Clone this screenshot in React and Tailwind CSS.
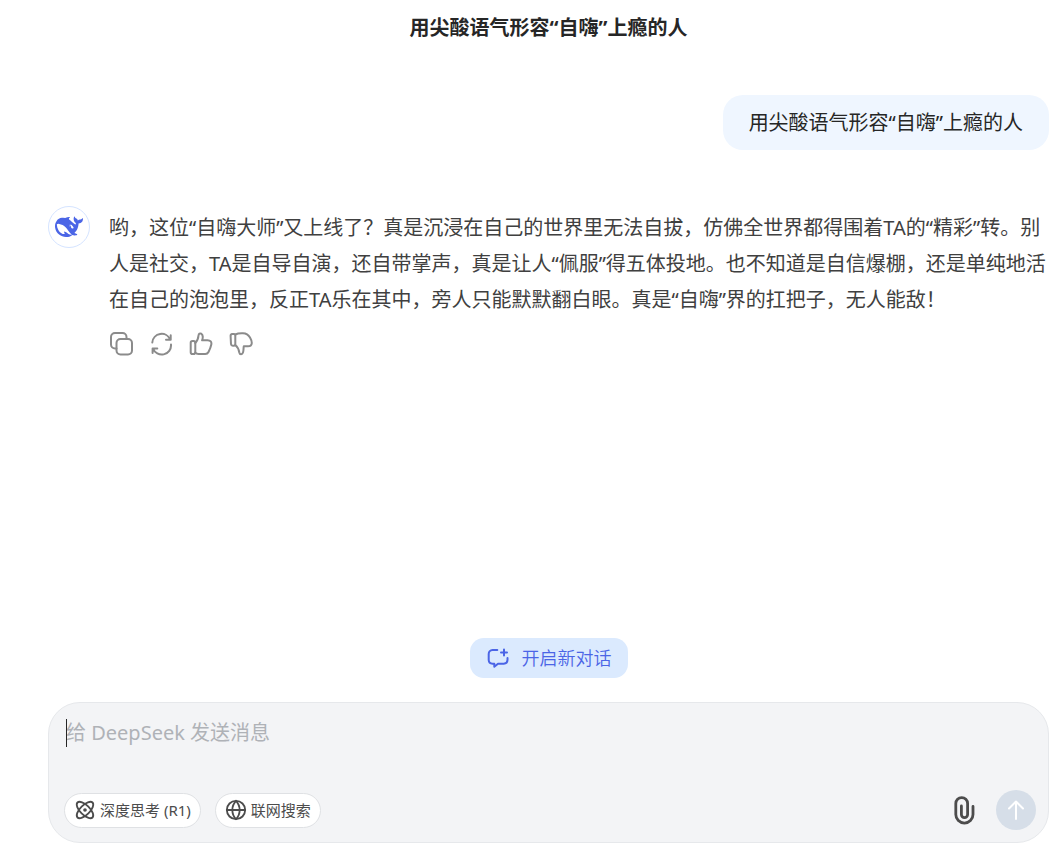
import { useState } from 'react';
import { Atom, Globe } from 'lucide-react';

const QUESTION = '用尖酸语气形容“自嗨”上瘾的人';
const ANSWER =
    '哟，这位“自嗨大师”又上线了？真是沉浸在自己的世界里无法自拔，仿佛全世界都得围着TA的“精彩”转。别人是社交，TA是自导自演，还自带掌声，真是让人“佩服”得五体投地。也不知道是自信爆棚，还是单纯地活在自己的泡泡里，反正TA乐在其中，旁人只能默默翻白眼。真是“自嗨”界的扛把子，无人能敌！';

function LineIcon({ children, className = 'h-6 w-6' }) {
    return (
        <svg
            viewBox="0 0 24 24"
            fill="none"
            stroke="currentColor"
            strokeWidth="2"
            strokeLinecap="round"
            strokeLinejoin="round"
            className={className}
            aria-hidden="true"
        >
            {children}
        </svg>
    );
}

function WhaleLogo() {
    return (
        <svg viewBox="0 0 24 24" className="h-7 w-7 fill-[#4b65e6]" aria-hidden="true">
            <path d="M23.748 4.482c-.254-.124-.364.113-.512.234-.051.039-.094.09-.137.136-.372.397-.806.657-1.373.626-.829-.046-1.537.214-2.163.848-.133-.782-.575-1.248-1.247-1.548-.352-.156-.708-.311-.955-.65-.172-.241-.219-.51-.305-.774-.055-.16-.11-.323-.293-.35-.2-.031-.278.136-.356.276-.313.572-.434 1.202-.422 1.84.027 1.436.633 2.58 1.838 3.393.137.093.172.187.129.323-.082.28-.18.552-.266.833-.055.179-.137.217-.329.14a5.526 5.526 0 01-1.736-1.18c-.857-.828-1.631-1.742-2.597-2.458a11.365 11.365 0 00-.689-.471c-.985-.957.13-1.743.388-1.836.27-.098.093-.432-.779-.428-.872.004-1.67.295-2.687.684a3.055 3.055 0 01-.465.137 9.597 9.597 0 00-2.883-.102c-1.885.21-3.39 1.102-4.497 2.623C.082 8.606-.231 10.684.152 12.85c.403 2.284 1.569 4.175 3.36 5.653 1.858 1.533 3.997 2.284 6.438 2.14 1.482-.085 3.133-.284 4.994-1.86.47.234.962.327 1.78.397.63.059 1.236-.03 1.705-.128.735-.156.684-.837.419-.961-2.155-1.004-1.682-.595-2.113-.926 1.096-1.296 2.746-2.642 3.392-7.003.05-.347.007-.565 0-.845-.004-.17.035-.237.23-.256a4.173 4.173 0 001.545-.475c1.396-.763 1.96-2.015 2.093-3.517.02-.23-.004-.467-.247-.588zM11.581 18c-2.089-1.642-3.102-2.183-3.52-2.16-.392.024-.321.471-.235.763.09.288.207.486.371.739.114.167.192.416-.113.603-.673.416-1.842-.14-1.897-.167-1.361-.802-2.5-1.86-3.301-3.307-.774-1.393-1.224-2.887-1.298-4.482-.02-.386.093-.522.477-.592a4.696 4.696 0 011.529-.039c2.132.312 3.946 1.265 5.468 2.774.868.86 1.525 1.887 2.202 2.891.72 1.066 1.494 2.082 2.48 2.914.348.292.625.514.891.677-.802.09-2.14.11-3.054-.614zm1-6.44a.306.306 0 01.415-.287.302.302 0 01.2.288.306.306 0 01-.31.307.303.303 0 01-.304-.308zm3.11 1.596c-.2.081-.399.151-.59.16a1.245 1.245 0 01-.798-.254c-.274-.23-.47-.358-.552-.758a1.73 1.73 0 01.016-.588c.07-.327-.008-.537-.239-.727-.187-.156-.426-.199-.688-.199a.559.559 0 01-.254-.078c-.11-.054-.2-.19-.114-.358.028-.054.16-.186.192-.21.356-.202.767-.136 1.146.016.352.144.618.408 1.001.782.391.451.462.576.685.914.176.265.336.537.445.848.067.195-.019.354-.25.452z" />
        </svg>
    );
}

const actions = [
    {
        label: '复制',
        icon: (
            <>
                <rect x="7.5" y="7" width="15.5" height="15.5" rx="4" />
                <path d="M7.5 16.5H6A4 4 0 0 1 2 12.5V5a4 4 0 0 1 4-4h7.5a4 4 0 0 1 4 4v2" />
            </>
        ),
    },
    {
        label: '重新生成',
        icon: (
            <>
                <path d="M3.3 10.5A9.3 9.3 0 0 1 21.2 7.7M21.7 3.3v4.4H17" />
                <path d="M22 12.5A9.3 9.3 0 0 1 4 16.5M3.6 20.9V16.5h4.7" />
            </>
        ),
    },
    {
        label: '喜欢',
        icon: (
            <>
                <rect x="1.7" y="9" width="4.6" height="13" rx="1.8" />
                <path d="M6.3 11C8.7 8.7 9.3 6 9.5 3.5C9.7 1.6 11 1 12.2 1.7C14.8 3.3 13.9 6 13.1 8.3H18.5C21.5 8.3 22.8 10 22.3 12.5C21.7 15.5 20.8 17.5 19.5 20C18.8 21.4 17.8 22 16.3 22H9.5C8 22 7 21.5 6.3 20.5" />
            </>
        ),
    },
    {
        label: '不喜欢',
        icon: (
            <>
                <path d="M3.3 2H5a1.3 1.3 0 0 1 1.3 1.3V12.5A1.3 1.3 0 0 1 5 13.8H3.8A1.8 1.8 0 0 1 2 12.2L1.6 4A1.9 1.9 0 0 1 3.3 2Z" />
                <path d="M6.3 2.5C8.5 1.4 11.5 1.2 14 1.3C17.5 1.4 19.5 3 21 5.5C22.2 7.5 22.8 9 22.8 11C22.7 13.2 21.3 14.3 19 14.3H14.8C14.3 16.5 14.8 18.5 14 20.5C13.3 22.7 10.8 23 10.3 20.5C9.9 18 9 15.2 6.3 13" />
            </>
        ),
    },
];

function ReplyActions() {
    return (
        <div className="mt-3.5 flex gap-4 text-[#8b8b8b]">
            {actions.map((action) => (
                <button key={action.label} type="button" aria-label={action.label} className="hover:text-gray-700">
                    <LineIcon>{action.icon}</LineIcon>
                </button>
            ))}
        </div>
    );
}

function Composer() {
    const [message, setMessage] = useState('');

    return (
        <form
            onSubmit={(e) => e.preventDefault()}
            className="w-full rounded-4xl border border-[#e6e8eb] bg-[#f3f4f6] py-3 pr-3 pl-[15px]"
        >
            <div className="relative">
                <textarea
                    aria-label="消息"
                    value={message}
                    onChange={(e) => setMessage(e.target.value)}
                    placeholder="给 DeepSeek 发送消息"
                    className="block h-[75px] w-full resize-none bg-transparent px-0.5 py-1 text-xl leading-7 text-[#262626] outline-none placeholder:text-[#afb2b7]"
                />
                {!message && <span className="absolute top-1 left-0.5 h-7 w-px bg-[#262626]" />}
            </div>

            <div className="flex items-center gap-3.5">
                <button
                    type="button"
                    className="flex h-[35px] items-center gap-1 rounded-full border border-[#dfe1e4] bg-white px-[9px] text-[15px] text-[#4c4c4c]"
                >
                    <Atom className="h-[22px] w-[22px]" />
                    深度思考 (R1)
                </button>
                <button
                    type="button"
                    className="flex h-[35px] items-center gap-1 rounded-full border border-[#dfe1e4] bg-white px-[9px] text-[15px] text-[#4c4c4c]"
                >
                    <Globe className="h-[22px] w-[22px]" />
                    联网搜索
                </button>

                <button type="button" aria-label="上传附件" className="ml-auto text-[#4c4c4c]">
                    <svg
                        viewBox="0 0 24 30"
                        fill="none"
                        stroke="currentColor"
                        strokeWidth="2.8"
                        strokeLinecap="round"
                        className="h-[30px] w-6"
                        aria-hidden="true"
                    >
                        <path d="M21 11.5V19.5A8.6 8.6 0 0 1 3.8 19.5V8.5A5.9 5.9 0 0 1 15.6 8.5V19.5A3.1 3.1 0 0 1 9.4 19.5V11" />
                    </svg>
                </button>
                <button
                    type="submit"
                    aria-label="发送"
                    className="ml-1.5 flex h-10 w-10 items-center justify-center rounded-full bg-[#d6dee8] text-white"
                >
                    <LineIcon>
                        <path d="M12 21V3.5M5 10.5L12 3.5l7 7" />
                    </LineIcon>
                </button>
            </div>
        </form>
    );
}

export default function App() {
    return (
        <div className="flex min-h-screen flex-col bg-white pr-2.5 pb-[3px] pl-12 font-['Noto_Sans','Noto_Sans_CJK_SC',sans-serif]">
            <header className="flex h-14 items-center justify-center">
                <h1 className="text-xl font-bold text-[#262626]">{QUESTION}</h1>
            </header>

            <main className="flex flex-col pt-[39px]">
                <div className="self-end rounded-[20px] bg-[#eff6ff] px-[26px] py-3 text-xl leading-[31px] text-[#262626]">
                    {QUESTION}
                </div>

                <div className="mt-14 flex gap-[19px]">
                    <div className="flex h-[42px] w-[42px] shrink-0 items-center justify-center rounded-full border border-[#d5e4ff]">
                        <WhaleLogo />
                    </div>
                    <div className="min-w-0 flex-1 pt-1">
                        <p className="text-xl leading-9 text-[#404040]">{ANSWER}</p>
                        <ReplyActions />
                    </div>
                </div>
            </main>

            <footer className="mt-auto flex flex-col items-center gap-6">
                <button
                    type="button"
                    className="flex h-10 items-center gap-3 rounded-[14px] bg-[#dbeafe] px-4 text-lg font-[350] text-[#4b65e6]"
                >
                    <LineIcon>
                        <path d="M11.3 4H6.5A4 4 0 0 0 2.7 8V14A4 4 0 0 0 6.5 17.8H8.3V20.8L12 17.8H17.8A4 4 0 0 0 21.5 14V12" />
                        <path d="M18 3.5V9.5M15 6.5H21" />
                    </LineIcon>
                    开启新对话
                </button>
                <Composer />
            </footer>
        </div>
    );
}
